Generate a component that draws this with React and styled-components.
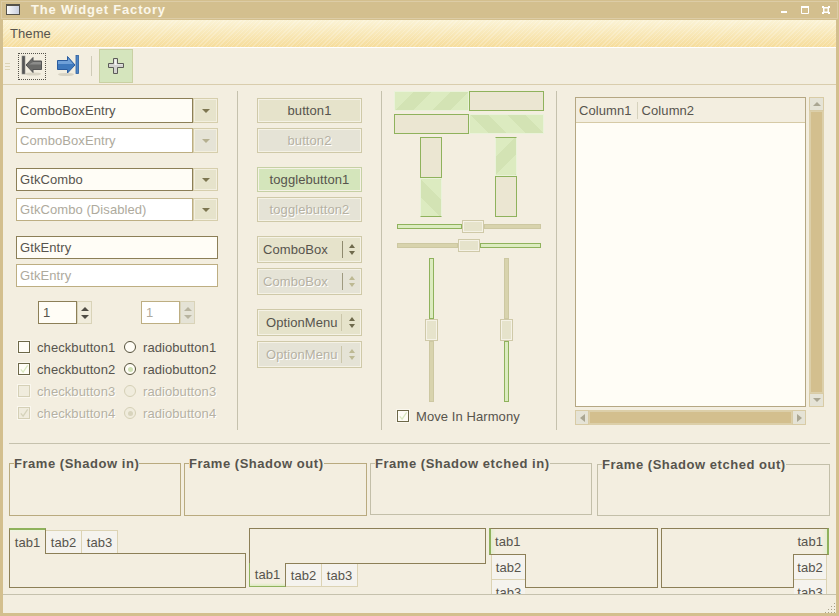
import React from "react";
import styled, { createGlobalStyle, css } from "styled-components";

const Global = createGlobalStyle`
  html, body { margin: 0; padding: 0; background: #f3eee0; }
  #root { width: 839px; height: 616px; overflow: hidden; }
  * { box-sizing: border-box; }
`;

const INK = "#57544d";
const MUTED = "#aeaa9d";
const LINE = "#8c7f57";
const SOFT = "#b9aa7f";
const TAN = "#d3bf8e";
const FILL = "#e6e3cb";
const DIS = "#e5e3d6";
const GREEN = "#8fb25c";
const PAPER = "#fffdf6";

const textFace = css`
  font-family: "Liberation Sans", Arial, sans-serif;
  font-size: 13px;
  letter-spacing: 0.08px;
  white-space: nowrap;
`;

const Page = styled.div`
  ${textFace}
  width: 839px;
  height: 616px;
  display: flex;
  flex-direction: column;
  background: ${TAN};
  color: ${INK};
`;
const TitleBar = styled.header`
  height: 20px;
  flex: none;
  display: flex;
  align-items: center;
  padding: 0 6px 1px 5px;
  background: ${TAN};
  border: 1px solid ${TAN};
  box-shadow: inset 0 0 0 1px #dccca6;
`;
const TitleText = styled.span`
  margin-left: 11px;
  flex: 1;
  font-weight: bold;
  font-size: 13px;
  letter-spacing: 0.8px;
  color: #fbf7ea;
`;
const WinIcon = styled.span`
  width: 14px;
  height: 11px;
  border: 1px solid #55524a;
  border-top-width: 2px;
  background: linear-gradient(90deg, #fafafa, #c9cfe0);
`;
const WinButtons = styled.div`
  display: flex;
  align-items: center;
  gap: 13px;
  margin-right: 2px;
`;
const Frame = styled.div`
  flex: 1;
  min-height: 0;
  margin: 0 3px 3px;
  display: flex;
  flex-direction: column;
  background: #f3eee0;
`;
const MenuBar = styled.nav`
  height: 28px;
  flex: none;
  padding: 0 7px;
  display: flex;
  align-items: center;
  border-bottom: 1px solid #ffffff;
  background:
    repeating-linear-gradient(135deg, rgba(255,255,255,.22) 0 1px, transparent 1px 3px),
    linear-gradient(#fbf3d6, #f6dd9c);
`;
const Toolbar = styled.div`
  height: 37px;
  flex: none;
  display: flex;
  align-items: center;
  border-bottom: 1px solid #d9cdad;
`;
const Grip = styled.span`
  width: 5px;
  height: 7px;
  margin: 0 8px 0 2px;
  background: repeating-linear-gradient(#dcd3b5 0 1px, transparent 1px 3px);
`;
const FocusTool = styled.span`
  width: 28px;
  height: 27px;
  display: flex;
  align-items: center;
  justify-content: center;
  border: 1px dotted #55524a;
`;
const Tool = styled.span`
  width: 34px;
  height: 34px;
  margin-left: 5px;
  display: flex;
  align-items: center;
  justify-content: center;
`;
const ToolSep = styled.span`
  width: 1px;
  height: 20px;
  margin: 0 7px 0 6px;
  background: #cfcbb8;
`;
const ActiveTool = styled(Tool)`
  margin-left: 0;
  background: #d5e5bd;
  border: 1px solid #c9d0a3;
`;

const Main = styled.main`
  height: 339px;
  flex: none;
  margin-top: 6px;
  display: flex;
`;
const Column = styled.section`
  height: 100%;
  flex: none;
  width: ${(p) => p.$w}px;
  padding: ${(p) => p.$pad};
  ${(p) => p.$rule && `border-right: 1px solid #c5c1ad;`}
  display: flex;
  flex-direction: column;
  gap: ${(p) => p.$gap || 0}px;
`;
const Group = styled.div`
  display: flex;
  flex-direction: column;
  gap: ${(p) => p.$gap || 5}px;
`;

const ComboRow = styled.div`
  display: flex;
  height: ${(p) => p.$h}px;
`;
const TextBox = styled.div`
  flex: 1;
  display: flex;
  align-items: center;
  padding-left: 3px;
  background: ${(p) => (p.$off ? "#ffffff" : PAPER)};
  border: 1px solid ${(p) => (p.$off ? "#bdae82" : LINE)};
  color: ${(p) => (p.$off ? MUTED : INK)};
`;
const DropBtn = styled.span`
  width: 25px;
  display: flex;
  align-items: center;
  justify-content: center;
  background: ${(p) => p.$bg || FILL};
  border: 1px solid #d6ceac;
  box-shadow: inset 0 0 0 1px #f3efdf;
`;
const Tri = styled.span`
  width: 0;
  height: 0;
  border-left: ${(p) => p.$s}px solid transparent;
  border-right: ${(p) => p.$s}px solid transparent;
  ${(p) =>
    p.$up
      ? `border-bottom: ${p.$h}px solid ${p.$c};`
      : `border-top: ${p.$h}px solid ${p.$c};`}
`;
const SideTri = styled.span`
  width: 0;
  height: 0;
  border-top: 4px solid transparent;
  border-bottom: 4px solid transparent;
  ${(p) =>
    p.$left
      ? `border-right: 5px solid #aaa692;`
      : `border-left: 5px solid #aaa692;`}
`;

const SpinRow = styled.div`
  display: flex;
  margin-top: -1px;
  padding-left: 22px;
  gap: 49px;
`;
const Spin = styled.div`
  width: 54px;
  height: 23px;
  display: flex;
`;
const SpinValue = styled.span`
  flex: 1;
  display: flex;
  align-items: center;
  padding-left: 4px;
  background: ${(p) => (p.$off ? "#ffffff" : PAPER)};
  border: 1px solid ${(p) => (p.$off ? "#bdae82" : LINE)};
  color: ${(p) => (p.$off ? MUTED : INK)};
`;
const SpinArrows = styled.span`
  width: 15px;
  display: flex;
  flex-direction: column;
  align-items: center;
  justify-content: center;
  gap: 4px;
  background: ${(p) => (p.$off ? DIS : "#f0ecdc")};
  border: 1px solid #d9d3b8;
`;
const ChecksGrid = styled.div`
  display: grid;
  grid-template-columns: 106px auto;
  grid-auto-rows: 22px;
  margin: -3px 0 0 2px;
`;
const Choice = styled.label`
  display: flex;
  align-items: center;
  gap: 7px;
  color: ${(p) => (p.$off ? "#b5b1a3" : INK)};
  ${(p) => p.$off && `text-shadow: 1px 1px 0 #ffffff;`}
`;
const CheckBox = styled.span`
  width: 12px;
  height: 12px;
  flex: none;
  display: flex;
  align-items: center;
  justify-content: center;
  background: ${(p) => (p.$off ? "#f0ecdd" : PAPER)};
  border: 1px solid ${(p) => (p.$off ? "#d5d0b6" : "#6d6848")};
  box-shadow: 0 0 0 1px #faf7ee;
`;
const Radio = styled.span`
  width: 12px;
  height: 12px;
  flex: none;
  display: flex;
  align-items: center;
  justify-content: center;
  border-radius: 50%;
  background: ${(p) => (p.$off ? "#f0ecdd" : PAPER)};
  border: 1px solid ${(p) => (p.$off ? "#d5d0b6" : "#55513b")};
`;
const RadioDot = styled.span`
  width: 5px;
  height: 5px;
  border-radius: 50%;
  background: ${(p) => (p.$off ? "#d8d4bd" : "#cfe0b4")};
`;

const PushBtn = styled.button`
  ${textFace}
  height: ${(p) => p.$h || 25}px;
  width: 105px;
  padding: 0;
  display: flex;
  align-items: center;
  justify-content: center;
  color: ${(p) => (p.$off ? "#b5b1a3" : INK)};
  background: ${(p) => (p.$on ? "#d4e5bb" : p.$off ? DIS : FILL)};
  border: 1px solid ${(p) => (p.$on ? "#c6d0a4" : "#cfc9a8")};
  box-shadow: inset 0 0 0 1px #f5f2e6;
  ${(p) => p.$off && `text-shadow: 1px 1px 0 #ffffff;`}
`;
const MenuBtn = styled(PushBtn)`
  justify-content: flex-start;
  padding-left: ${(p) => p.$pl}px;
`;
const BtnLabel = styled.span`
  flex: 1;
  text-align: left;
`;
const BtnRule = styled.span`
  width: 1px;
  height: 17px;
  background: ${(p) => (p.$soft ? "#cbc6aa" : p.$off ? "#9f9a80" : "#8f8a6e")};
`;
const BtnArrows = styled.span`
  width: ${(p) => p.$w}px;
  display: flex;
  flex-direction: column;
  align-items: center;
  gap: 3px;
`;

const stripes = (deg) => `repeating-linear-gradient(${deg}deg, #dcebc0 0 13px, #d3e3b4 13px 26px)`;
const Bars = styled.div`
  display: flex;
  flex-direction: ${(p) => (p.$v ? "column" : "row")};
  flex: none;
`;
const HBar = styled.div`
  width: 75px;
  height: 20px;
  ${(p) =>
    p.$fill
      ? `background: ${stripes(p.$deg)}; border: 1px solid #eaf2da;`
      : `background: #ebe6d2; border: 1px solid ${GREEN};`}
`;
const VBarRow = styled.div`
  display: flex;
  gap: 53px;
  margin-left: 26px;
`;
const VBar = styled.div`
  width: 22px;
  height: ${(p) => p.$h}px;
  ${(p) =>
    p.$fill
      ? `background: ${stripes(p.$deg)}; border: 1px solid #eaf2da;`
      : `background: #ebe6d2; border: 1px solid ${GREEN};`}
  ${(p) => p.$fill && p.$end === "bottom" && `border-bottom: 1px solid ${GREEN};`}
  ${(p) => p.$fill && p.$end === "top" && `border-top: 1px solid ${GREEN};`}
`;
const HScale = styled.div`
  width: 144px;
  height: 13px;
  margin: ${(p) => p.$top || 0}px 0 0 3px;
  display: flex;
  align-items: center;
`;
const HTrack = styled.span`
  height: 5px;
  width: ${(p) => p.$len}px;
  ${(p) =>
    p.$on
      ? `background: #dcebc0; border: 1px solid ${GREEN};`
      : `background: #d8d3ad; border: 1px solid #cdc8a2;`}
`;
const HThumb = styled.span`
  width: 22px;
  height: 13px;
  background: ${FILL};
  border: 1px solid #cfc9a8;
  box-shadow: inset 0 0 0 1px #f5f2e6;
`;
const VScaleRow = styled.div`
  display: flex;
  gap: 62px;
  margin: 3px 0 0 31px;
`;
const VScale = styled.div`
  width: 13px;
  height: 144px;
  display: flex;
  flex-direction: column;
  align-items: center;
`;
const VTrack = styled.span`
  width: 5px;
  height: 61px;
  ${(p) =>
    p.$on
      ? `background: #dcebc0; border: 1px solid ${GREEN};`
      : `background: #d8d3ad; border: 1px solid #cdc8a2;`}
`;
const VThumb = styled.span`
  width: 13px;
  height: 22px;
  flex: none;
  background: ${FILL};
  border: 1px solid #cfc9a8;
  box-shadow: inset 0 0 0 1px #f5f2e6;
`;
const Harmony = styled(Choice)`
  margin: 1px 0 0 3px;
  height: 20px;
`;

const TreeGrid = styled.div`
  display: grid;
  grid-template-columns: 231px 15px;
  grid-template-rows: 310px 15px;
  gap: 3px;
`;
const Tree = styled.div`
  display: flex;
  flex-direction: column;
  border: 1px solid #b5a783;
  background: ${PAPER};
`;
const TreeHead = styled.div`
  height: 25px;
  flex: none;
  display: flex;
  align-items: center;
  background: #f3eee0;
  border-bottom: 1px solid #d6caa6;
  padding-left: 3px;
`;
const HeadCell = styled.span`
  ${(p) =>
    p.$rule &&
    `padding-right: 5px; margin-right: 4px; border-right: 1px solid #d6d2bd; line-height: 17px;`}
`;
const Scroll = styled.div`
  display: flex;
  flex-direction: ${(p) => (p.$v ? "column" : "row")};
  background: #dccfa9;
`;
const ScrollBtn = styled.span`
  flex: none;
  width: ${(p) => (p.$v ? "15px" : "14px")};
  height: ${(p) => (p.$v ? "14px" : "15px")};
  display: flex;
  align-items: center;
  justify-content: center;
  background: ${DIS};
  border: 1px solid #d8cba5;
`;
const ScrollThumb = styled.span`
  flex: 1;
  margin: ${(p) => (p.$v ? "1px 2px" : "2px 1px")};
  background: ${TAN};
`;

const HRule = styled.div`
  height: 1px;
  flex: none;
  margin: 13px 6px 0;
  background: #c5c1ad;
`;
const FrameRow = styled.div`
  flex: none;
  height: 60px;
  margin: 12px 0 0 6px;
  display: flex;
  align-items: flex-start;
  gap: 3px;
`;
const FrameBox = styled.fieldset`
  width: ${(p) => p.$w}px;
  height: ${(p) => p.$h || 60}px;
  margin: ${(p) => p.$m || 0};
  padding: 0;
  min-width: 0;
  border: 1px solid ${(p) => (p.$etched ? "#c3bfa9" : SOFT)};
`;
const FrameLegend = styled.legend`
  margin-left: 4px;
  padding: 0;
  height: 14px;
  line-height: 16px;
  font-weight: bold;
  letter-spacing: 0.53px;
`;
const TabsRow = styled.div`
  flex: none;
  height: 66px;
  margin: 12px 0 0 6px;
  display: flex;
  gap: 3px;
  overflow: hidden;
`;
const NotebookV = styled.div`
  width: 237px;
  height: 60px;
  display: flex;
  flex-direction: column;
`;
const Panel = styled.div`
  border: 1px solid ${LINE};
  background: #f3eee0;
  height: ${(p) => p.$h}px;
  width: ${(p) => p.$w}px;
  flex: none;
`;
const TabStrip = styled.div`
  display: flex;
  align-items: ${(p) => (p.$bottom ? "flex-start" : "flex-end")};
  height: 25px;
  flex: none;
`;
const BottomStrip = styled(TabStrip)`
  margin-top: -1px;
`;
const FlatTab = styled.span`
  width: ${(p) => p.$w || 36}px;
  height: 23px;
  display: flex;
  align-items: center;
  justify-content: center;
  background: #f5f3ee;
  border: 1px solid #dcd3b4;
  ${(p) => (p.$bottom ? "border-top: none; margin-top: 1px;" : "border-bottom: none;")}
  border-left: none;
`;
const ActiveTop = styled.span`
  position: relative;
  z-index: 1;
  width: 37px;
  height: 26px;
  margin-bottom: -1px;
  display: flex;
  align-items: center;
  justify-content: center;
  background: linear-gradient(#eef3de 0, #f3eee0 3px);
  border-top: 2px solid ${GREEN};
  border-left: 1px solid ${LINE};
  border-right: 1px solid ${LINE};
`;
const ActiveBottom = styled.span`
  position: relative;
  z-index: 1;
  width: 37px;
  height: 24px;
  display: flex;
  align-items: center;
  justify-content: center;
  background: linear-gradient(0deg, #dcebc0 0, #f3eee0 3px);
  border-bottom: 1px solid ${GREEN};
  border-left: 1px solid ${GREEN};
  border-right: 1px solid ${LINE};
`;
const NotebookH = styled.div`
  width: 169px;
  display: flex;
  flex-direction: ${(p) => (p.$right ? "row-reverse" : "row")};
  align-items: flex-start;
  flex: none;
`;
const StackTabs = styled.div`
  width: 36px;
  flex: none;
  display: flex;
  flex-direction: column;
  align-items: ${(p) => (p.$right ? "flex-start" : "flex-end")};
  position: relative;
  z-index: 1;
`;
const ActiveSide = styled.span`
  width: ${(p) => (p.$right ? 36 : 37)}px;
  height: 27px;
  flex: none;
  padding: ${(p) => (p.$right ? "0 4px 0 0" : "0 0 0 4px")};
  display: flex;
  align-items: center;
  justify-content: ${(p) => (p.$right ? "flex-end" : "flex-start")};
  border-top: 1px solid ${LINE};
  border-bottom: 1px solid ${LINE};
  ${(p) =>
    p.$right
      ? `margin-left: -1px; border-right: 2px solid ${GREEN}; background: linear-gradient(270deg,#e4eed0 0,#f3eee0 5px);`
      : `margin-right: -1px; border-left: 2px solid ${GREEN}; background: linear-gradient(90deg,#e4eed0 0,#f3eee0 5px);`}
`;
const StackTab = styled.span`
  width: ${(p) => (p.$right ? 33 : 34)}px;
  height: 25px;
  flex: none;
  display: flex;
  align-items: center;
  justify-content: center;
  background: #f5f3ee;
  border-bottom: 1px solid #dcd3b4;
  ${(p) =>
    p.$right
      ? `border-right: 1px solid #dcd3b4;`
      : `border-left: 1px solid #dcd3b4;`}
`;
const StatusBar = styled.footer`
  flex: 1;
  min-height: 0;
  border-top: 1px solid #c5c1ad;
  display: flex;
  justify-content: flex-end;
  align-items: flex-end;
`;

const BackIcon = () => (
  <svg width="22" height="22" viewBox="0 0 22 22">
    <ellipse cx="12" cy="19" rx="8" ry="1.6" fill="#d8d3c3" />
    <rect x="1" y="1" width="3" height="18" fill="#555" stroke="#8a8a86" strokeWidth=".6" />
    <path d="M5 10 L12 2.5 V6 H20.5 V14.5 H12 V17.5 Z" fill="#6a6a68" stroke="#555" strokeWidth="1" />
    <path d="M12 7 H20 V9.5 H8 Z" fill="#8c8c8a" />
  </svg>
);
const ForwardIcon = () => (
  <svg width="24" height="24" viewBox="0 0 24 24">
    <ellipse cx="10" cy="20.5" rx="8" ry="1.6" fill="#d8d3c3" />
    <path d="M1.5 6.5 H11.5 V2.5 L19 11 L11.5 19 V15.5 H1.5 Z" fill="#3f79bd" stroke="#2b5c9e" strokeWidth="1" />
    <path d="M2 7 H12 V4 L17 10 H2 Z" fill="#6fa0d8" />
    <rect x="20" y="1.5" width="2.5" height="18" fill="#4f86c6" stroke="#2b5c9e" strokeWidth=".8" />
  </svg>
);
const AddIcon = () => (
  <svg width="18" height="18" viewBox="0 0 18 18">
    <path d="M6.5 1.5 H10.5 V6.5 H16.5 V10.5 H10.5 V16.5 H6.5 V10.5 H1.5 V6.5 H6.5 Z" fill="#d4d4d0" stroke="#5c5c58" strokeWidth="1" />
    <path d="M7.5 2.5 H9.5 V7.5 H15.5 V8 H7.5 Z" fill="#f4f4f2" />
  </svg>
);
const Tick = ({ c }) => (
  <svg width="10" height="10" viewBox="0 0 11 11">
    <path d="M2 6 L4.5 9 L9.5 1.5" fill="none" stroke={c} strokeWidth="1.4" />
  </svg>
);
const WinMin = () => (
  <svg width="8" height="8" viewBox="0 0 8 8"><rect x="1" y="5" width="6" height="2" fill="#fff" /></svg>
);
const WinMax = () => (
  <svg width="8" height="8" viewBox="0 0 8 8"><path d="M.5 1.5 H7.5 V7.5 H.5 Z" fill="none" stroke="#fff" strokeWidth="1" /><rect y="0" width="8" height="2" fill="#fff" /></svg>
);
const WinClose = () => (
  <svg width="8" height="8" viewBox="0 0 8 8"><path d="M0 0 H2 V1 H6 V0 H8 V2 H7 V6 H8 V8 H6 V7 H2 V8 H0 V6 H1 V2 H0 Z M2.5 2.5 V5.5 H5.5 V2.5 Z" fill="#fff" fillRule="evenodd" /></svg>
);
const ResizeGrip = () => (
  <svg width="12" height="12" viewBox="0 0 12 12">
    {[[10, 2], [7, 5], [10, 5], [4, 8], [7, 8], [10, 8], [1, 11], [4, 11], [7, 11], [10, 11]].map(([x, y]) => (
      <rect key={`${x}-${y}`} x={x} y={y} width="1" height="1" fill="#a8a28a" />
    ))}
  </svg>
);

const Updown = ({ c, w }) => (
  <BtnArrows $w={w}>
    <Tri $up $s={3} $h={4} $c={c} />
    <Tri $s={3} $h={4} $c={c} />
  </BtnArrows>
);

const Combo = ({ text, off, h, bg, arrow = "#7d7650" }) => (
  <ComboRow $h={h}>
    <TextBox $off={off}>{text}</TextBox>
    <DropBtn $bg={bg}><Tri $s={4} $h={4} $c={arrow} /></DropBtn>
  </ComboRow>
);

export default function App() {
  return (
    <Page>
      <Global />
      <TitleBar>
        <WinIcon />
        <TitleText>The Widget Factory</TitleText>
        <WinButtons>
          <WinMin />
          <WinMax />
          <WinClose />
        </WinButtons>
      </TitleBar>
      <Frame>
        <MenuBar>Theme</MenuBar>
        <Toolbar>
          <Grip />
          <FocusTool><BackIcon /></FocusTool>
          <Tool><ForwardIcon /></Tool>
          <ToolSep />
          <ActiveTool><AddIcon /></ActiveTool>
        </Toolbar>
        <Main>
          <Column $w={235} $rule $pad="7px 19px 0 13px" $gap={15}>
            <Group>
              <Combo text="ComboBoxEntry" h={25} />
              <Combo text="ComboBoxEntry" h={25} off bg={DIS} arrow="#b5b090" />
            </Group>
            <Group $gap={7}>
              <Combo text="GtkCombo" h={23} />
              <Combo text="GtkCombo (Disabled)" h={23} off />
            </Group>
            <Group>
              <ComboRow $h={23}><TextBox>GtkEntry</TextBox></ComboRow>
              <ComboRow $h={23}><TextBox $off>GtkEntry</TextBox></ComboRow>
            </Group>
            <SpinRow>
              <Spin>
                <SpinValue>1</SpinValue>
                <SpinArrows><Tri $up $s={4} $h={4} $c="#4f4c44" /><Tri $s={4} $h={4} $c="#4f4c44" /></SpinArrows>
              </Spin>
              <Spin>
                <SpinValue $off>1</SpinValue>
                <SpinArrows $off><Tri $up $s={4} $h={4} $c="#b8b49f" /><Tri $s={4} $h={4} $c="#b8b49f" /></SpinArrows>
              </Spin>
            </SpinRow>
            <ChecksGrid>
              <Choice><CheckBox />checkbutton1</Choice>
              <Choice><Radio />radiobutton1</Choice>
              <Choice><CheckBox><Tick c="#d9e9c0" /></CheckBox>checkbutton2</Choice>
              <Choice><Radio><RadioDot /></Radio>radiobutton2</Choice>
              <Choice $off><CheckBox $off />checkbutton3</Choice>
              <Choice $off><Radio $off />radiobutton3</Choice>
              <Choice $off><CheckBox $off><Tick c="#d5d3ba" /></CheckBox>checkbutton4</Choice>
              <Choice $off><Radio $off><RadioDot $off /></Radio>radiobutton4</Choice>
            </ChecksGrid>
          </Column>
          <Column $w={144} $rule $pad="7px 19px 0" $gap={14}>
            <Group>
              <PushBtn>button1</PushBtn>
              <PushBtn $off>button2</PushBtn>
            </Group>
            <Group>
              <PushBtn $on>togglebutton1</PushBtn>
              <PushBtn $off>togglebutton2</PushBtn>
            </Group>
            <Group>
              <MenuBtn $h={27} $pl={5}><BtnLabel>ComboBox</BtnLabel><BtnRule /><Updown c="#6f6a4c" w={18} /></MenuBtn>
              <MenuBtn $h={27} $pl={5} $off><BtnLabel>ComboBox</BtnLabel><BtnRule $off /><Updown c="#bdb993" w={18} /></MenuBtn>
            </Group>
            <Group>
              <MenuBtn $h={27} $pl={8}><BtnLabel>OptionMenu</BtnLabel><BtnRule $soft /><Updown c="#6f6a4c" w={19} /></MenuBtn>
              <MenuBtn $h={27} $pl={8} $off><BtnLabel>OptionMenu</BtnLabel><BtnRule $soft /><Updown c="#bdb993" w={19} /></MenuBtn>
            </Group>
          </Column>
          <Column $w={175} $rule $pad="0 12px" $gap={3}>
            <Bars>
              <HBar $fill $deg={135} />
              <HBar />
            </Bars>
            <Bars>
              <HBar />
              <HBar $fill $deg={45} />
            </Bars>
            <VBarRow>
              <Bars $v>
                <VBar $h={41} />
                <VBar $h={39} $fill $deg={45} $end="bottom" />
              </Bars>
              <Bars $v>
                <VBar $h={39} $fill $deg={135} $end="top" />
                <VBar $h={41} />
              </Bars>
            </VBarRow>
            <HScale>
              <HTrack $on $len={65} />
              <HThumb />
              <HTrack $len={57} />
            </HScale>
            <HScale $top={3}>
              <HTrack $len={61} />
              <HThumb />
              <HTrack $on $len={61} />
            </HScale>
            <VScaleRow>
              <VScale><VTrack $on /><VThumb /><VTrack /></VScale>
              <VScale><VTrack /><VThumb /><VTrack $on /></VScale>
            </VScaleRow>
            <Harmony><CheckBox><Tick c="#d9e9c0" /></CheckBox>Move In Harmony</Harmony>
          </Column>
          <Column $w={279} $pad="6px 0 0 18px">
            <TreeGrid>
              <Tree>
                <TreeHead>
                  <HeadCell $rule>Column1</HeadCell>
                  <HeadCell>Column2</HeadCell>
                </TreeHead>
              </Tree>
              <Scroll $v>
                <ScrollBtn $v><Tri $up $s={4} $h={4} $c="#aaa692" /></ScrollBtn>
                <ScrollThumb $v />
                <ScrollBtn $v><Tri $s={4} $h={4} $c="#aaa692" /></ScrollBtn>
              </Scroll>
              <Scroll>
                <ScrollBtn><SideTri $left /></ScrollBtn>
                <ScrollThumb />
                <ScrollBtn><SideTri /></ScrollBtn>
              </Scroll>
            </TreeGrid>
          </Column>
        </Main>
        <HRule />
        <FrameRow>
          <FrameBox $w={172}><FrameLegend>Frame (Shadow in)</FrameLegend></FrameBox>
          <FrameBox $w={183}><FrameLegend>Frame (Shadow out)</FrameLegend></FrameBox>
          <FrameBox $w={222} $h={59} $etched><FrameLegend>Frame (Shadow etched in)</FrameLegend></FrameBox>
          <FrameBox $w={233} $h={59} $m="1px 0 0 2px" $etched><FrameLegend>Frame (Shadow etched out)</FrameLegend></FrameBox>
        </FrameRow>
        <TabsRow>
          <NotebookV>
            <TabStrip>
              <ActiveTop>tab1</ActiveTop>
              <FlatTab>tab2</FlatTab>
              <FlatTab>tab3</FlatTab>
            </TabStrip>
            <Panel $h={35} $w={237} />
          </NotebookV>
          <NotebookV>
            <Panel $h={36} $w={237} />
            <BottomStrip $bottom>
              <ActiveBottom>tab1</ActiveBottom>
              <FlatTab $bottom>tab2</FlatTab>
              <FlatTab $bottom>tab3</FlatTab>
            </BottomStrip>
          </NotebookV>
          <NotebookH>
            <StackTabs>
              <ActiveSide>tab1</ActiveSide>
              <StackTab>tab2</StackTab>
              <StackTab>tab3</StackTab>
            </StackTabs>
            <Panel $h={60} $w={133} />
          </NotebookH>
          <NotebookH $right>
            <StackTabs $right>
              <ActiveSide $right>tab1</ActiveSide>
              <StackTab $right>tab2</StackTab>
              <StackTab $right>tab3</StackTab>
            </StackTabs>
            <Panel $h={60} $w={133} />
          </NotebookH>
        </TabsRow>
        <StatusBar><ResizeGrip /></StatusBar>
      </Frame>
    </Page>
  );
}
